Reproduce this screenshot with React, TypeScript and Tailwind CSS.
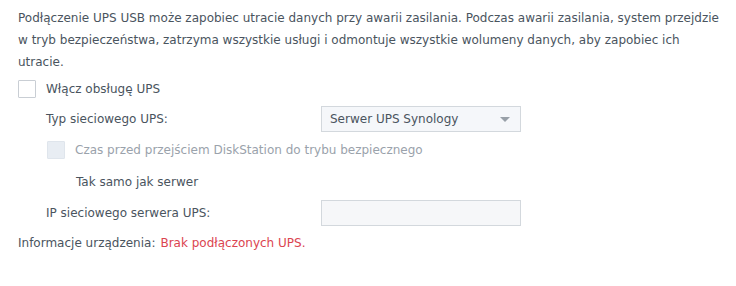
import React from "react";

const App: React.FC = () => {
  return (
    <div className="w-[736px] h-[286px] bg-white text-[12px] text-[#4a545e] font-['DejaVu_Sans',Verdana,sans-serif]">
      <div className="pl-[18px] pr-[16px] pt-[7px]">
        <p className="leading-[22px]">
          Podłączenie UPS USB może zapobiec utracie danych przy awarii zasilania. Podczas awarii zasilania, system przejdzie
          w tryb bezpieczeństwa, zatrzyma wszystkie usługi i odmontuje wszystkie wolumeny danych, aby zapobiec ich
          utracie.
        </p>

        {/* Enable UPS */}
        <div className="h-[31px] flex items-center">
          <div className="w-[18px] h-[18px] border border-[#c9ced4] bg-white rounded-[1px]" />
          <span className="ml-[10px]">Włącz obsługę UPS</span>
        </div>

        <div className="pl-[28px]">
          {/* Network UPS type */}
          <div className="h-[30px] flex items-center">
            <span className="w-[275px]">Typ sieciowego UPS:</span>
            <div className="w-[200px] h-[26px] border border-[#d3d8dd] bg-[#f5f7fa] flex items-center justify-between pl-[8px] pr-[10px]">
              <span>Serwer UPS Synology</span>
              <svg width="10" height="5" viewBox="0 0 10 5">
                <path d="M0 0h10L5 5z" fill="#98a0a8" />
              </svg>
            </div>
          </div>

          {/* Safe mode delay (disabled) */}
          <div className="h-[32px] flex items-center">
            <div className="w-[18px] h-[18px] ml-[1px] border border-[#dfe5ec] bg-[#e8edf3] rounded-[1px]" />
            <span className="ml-[10px] text-[#9aa2ab]">Czas przed przejściem DiskStation do trybu bezpiecznego</span>
          </div>

          <div className="h-[32px] flex items-center pl-[30px]">
            <span>Tak samo jak serwer</span>
          </div>

          {/* Server IP */}
          <div className="h-[30px] flex items-center">
            <span className="w-[275px]">IP sieciowego serwera UPS:</span>
            <div className="w-[200px] h-[26px] border border-[#d3d8dd] bg-[#f6f7f9]" />
          </div>
        </div>

        <div className="h-[30px] flex items-center">
          <span>Informacje urządzenia:</span>
          <span className="ml-[5px] text-[#db4450]">Brak podłączonych UPS.</span>
        </div>
      </div>
    </div>
  );
};

export default App;
